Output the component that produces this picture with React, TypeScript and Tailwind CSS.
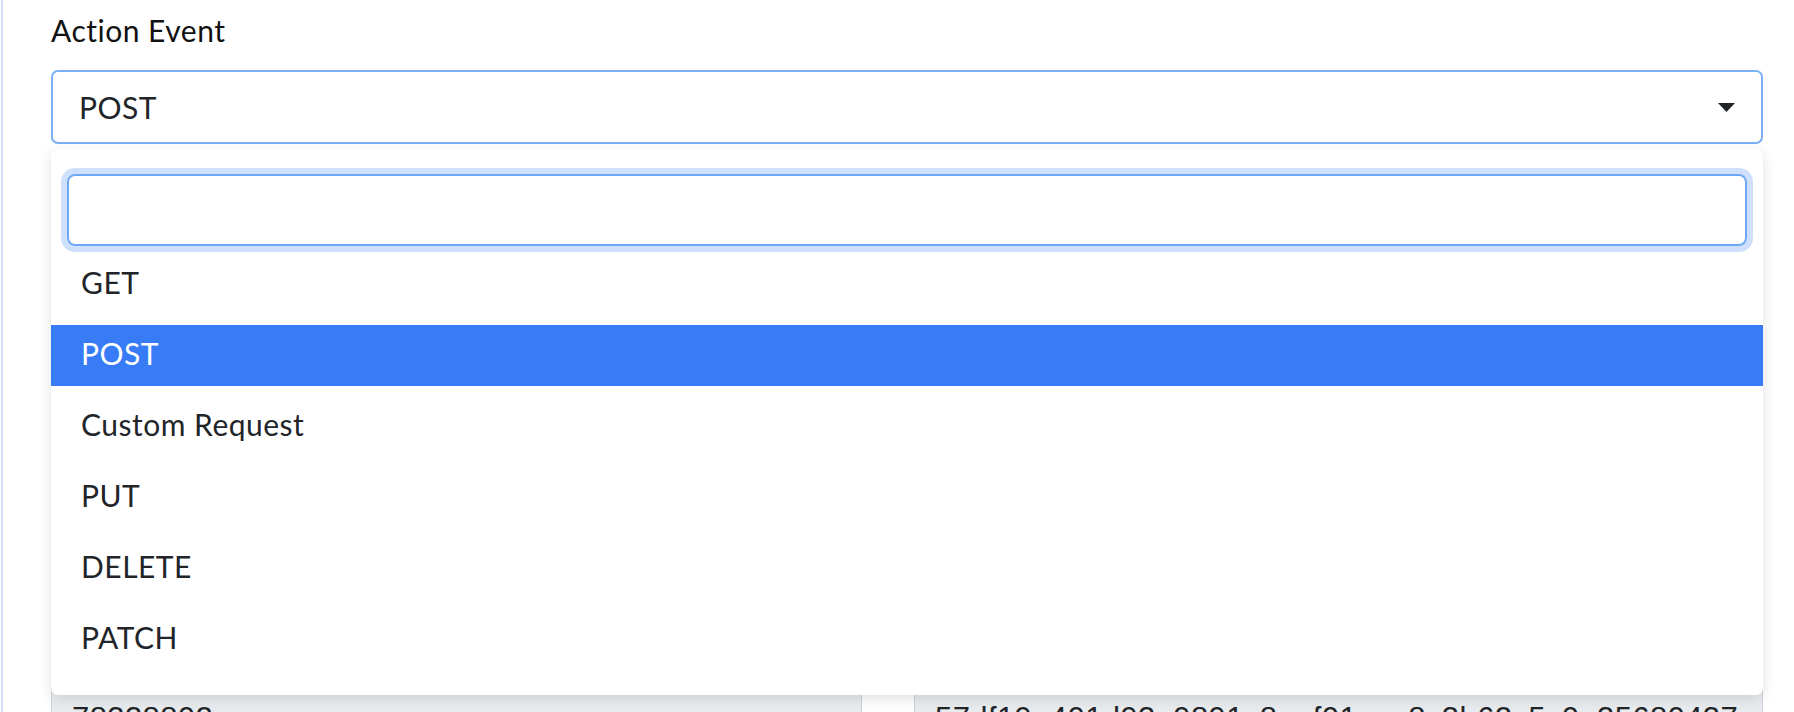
import { useState } from "react";

const methods = ["GET", "POST", "Custom Request", "PUT", "DELETE", "PATCH"];

export default function App() {
  const [selected, setSelected] = useState("POST");
  const [query, setQuery] = useState("");

  const visible = methods.filter((m) => m.toLowerCase().includes(query.toLowerCase()));

  return (
    <div className="w-[1794px] h-[712px] overflow-hidden bg-white font-['Lato',sans-serif] text-[#212529] tracking-[0.5px]">
      <div className="h-full ml-[1px] border-l-2 border-[#d4e3fb] pl-[48px] pr-[31px] pt-[12px]">
        <label className="block text-[30px] leading-[36px] text-[#111]">Action Event</label>

        <div className="relative mt-[22px]">
          {/* Select */}
          <button className="w-full h-[74px] flex items-center justify-between pl-[26px] pr-[26px] rounded-[7px] border-2 border-[#7ab0f4] bg-white text-left">
            <span className="text-[30px] leading-none">{selected}</span>
            <svg width="17" height="9" viewBox="0 0 17 9" className="fill-[#212529]">
              <path d="M0 0h17L8.5 9z" />
            </svg>
          </button>

          {/* Form rows behind the menu */}
          <div className="mt-[535px] flex h-[74px] font-['Liberation_Sans',sans-serif] tracking-[0.4px]">
            <div className="w-[811px] shrink-0 bg-[#e9ecef] border border-[#ced4da] rounded-l-[6px] pl-[20px] pt-[23px] text-[31px] leading-none">
              78338802
            </div>
            <div className="w-[52px] shrink-0 bg-white"></div>
            <div className="flex-1 bg-[#e9ecef] border border-[#ced4da] rounded-[6px] pl-[20px] pt-[23px] text-[31px] leading-none whitespace-nowrap overflow-hidden">
              57df19e401d93a9891c8eef01eca8c3b62c5c0a35680437
            </div>
          </div>

          {/* Dropdown menu */}
          <div className="absolute left-0 right-0 top-[79px] bg-white rounded-[7px] shadow-[0_4px_14px_rgba(0,0,0,0.12)] pt-[25px] pb-[25px] z-10">
            <div className="px-[16px] mb-[8px]">
              <input
                value={query}
                onChange={(e) => setQuery(e.target.value)}
                className="w-full h-[72px] rounded-[8px] border-2 border-[#6ea8f2] shadow-[0_0_0_6px_#cfe0fc] outline-none px-[20px] text-[30px]"
              />
            </div>
            <ul className="flex flex-col gap-[10px]">
              {visible.map((m) => (
                <li
                  key={m}
                  onClick={() => setSelected(m)}
                  className={
                    "h-[61px] flex items-center pl-[30px] pb-[5px] text-[30px] cursor-pointer " +
                    (m === selected ? "bg-[#377cf6] text-white" : "text-[#212529]")
                  }
                >
                  {m}
                </li>
              ))}
            </ul>
          </div>
        </div>
      </div>
    </div>
  );
}
